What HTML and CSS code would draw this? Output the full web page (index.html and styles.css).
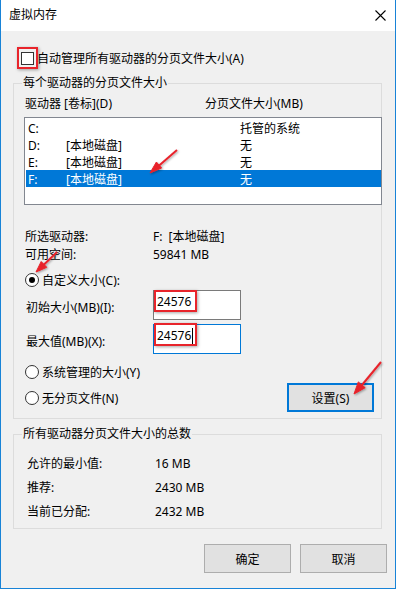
FILE: index.html
```html
<!DOCTYPE html>
<html lang="zh-CN">
<head>
<meta charset="utf-8">
<title>虚拟内存</title>
<link rel="stylesheet" href="styles.css">
</head>
<body>
<div class="window">
  <div class="titlebar">
    <span class="title">虚拟内存</span>
    <svg class="close" width="11" height="11" viewBox="0 0 11 11"><path d="M0.5 0.5 L10.5 10.5 M10.5 0.5 L0.5 10.5" stroke="#000" stroke-width="1.1" fill="none"/></svg>
  </div>
  <div class="content">
    <div class="auto-row">
      <span class="checkbox"></span>
      <span class="auto-label">自动管理所有驱动器的分页文件大小(A)</span>
    </div>

    <div class="group g1">
      <div class="legend">每个驱动器的分页文件大小</div>
      <div class="cols">
        <span class="col1">驱动器 [卷标](D)</span>
        <span>分页文件大小(MB)</span>
      </div>
      <div class="listbox">
        <div class="lrow"><span>C:</span><span></span><span>托管的系统</span></div>
        <div class="lrow"><span>D:</span><span>[本地磁盘]</span><span>无</span></div>
        <div class="lrow"><span>E:</span><span>[本地磁盘]</span><span>无</span></div>
        <div class="lrow selected"><span>F:</span><span>[本地磁盘]</span><span>无</span></div>
      </div>
      <div class="info first"><span class="key">所选驱动器:</span><span class="val">F:<span class="gap"></span>[本地磁盘]</span></div>
      <div class="info"><span class="key">可用空间:</span><span class="val">59841 MB</span></div>
      <div class="radio-row r-custom"><span class="radio checked"></span><span>自定义大小(C):</span></div>
      <div class="field-row"><span class="fkey">初始大小(MB)(I):</span><span class="input">24576</span></div>
      <div class="field-row second"><span class="fkey">最大值(MB)(X):</span><span class="input focused">24576<span class="caret"></span></span></div>
      <div class="radio-row r-sys"><span class="radio"></span><span>系统管理的大小(Y)</span></div>
      <div class="last-row">
        <div class="radio-inline"><span class="radio"></span><span>无分页文件(N)</span></div>
        <div class="btn default set-btn">设置(S)</div>
      </div>
    </div>

    <div class="group g2">
      <div class="legend">所有驱动器分页文件大小的总数</div>
      <div class="trow"><span class="tkey">允许的最小值:</span><span>16 MB</span></div>
      <div class="trow"><span class="tkey">推荐:</span><span>2430 MB</span></div>
      <div class="trow"><span class="tkey">当前已分配:</span><span>2432 MB</span></div>
    </div>

    <div class="buttons">
      <div class="btn">确定</div>
      <div class="btn">取消</div>
    </div>
  </div>

  <span class="mark mark-check"></span>
  <span class="mark mark-init"></span>
  <span class="mark mark-max"></span>
  <svg class="arrows" width="396" height="589" viewBox="0 0 396 589">
    <defs>
      <filter id="sh" x="-50%" y="-50%" width="200%" height="200%">
        <feDropShadow dx="1" dy="1" stdDeviation="1.2" flood-color="#000" flood-opacity="0.35"/>
      </filter>
    </defs>
    <g filter="url(#sh)" fill="#e8242b" stroke="#e8242b">
      <line x1="177" y1="150" x2="158" y2="166.5" stroke-width="2"/>
      <polygon points="150,173 161.6,168 156.4,162" stroke-width="1"/>
      <line x1="57" y1="252" x2="43" y2="265.5" stroke-width="2"/>
      <polygon points="36,272 46.8,267.3 41.2,261.5" stroke-width="1"/>
      <line x1="381" y1="362" x2="362" y2="385" stroke-width="2"/>
      <polygon points="354,394 365.2,387.7 358.3,381.9" stroke-width="1"/>
    </g>
  </svg>
</div>
</body>
</html>
```

FILE: styles.css
```css
* { box-sizing: border-box; }
html, body { margin: 0; padding: 0; background: #f0f0f0; }
body {
  font-family: "Noto Sans", "Noto Sans CJK SC", sans-serif;
  font-size: 12px;
  color: #000;
}
.window {
  position: relative;
  width: 396px;
  height: 589px;
  background: #f0f0f0;
  border: 1px solid #1883d7;
  border-top: none;
  overflow: hidden;
}
.titlebar {
  height: 31px;
  background: #fff;
  display: flex;
  align-items: center;
  padding-left: 8px;
  padding-right: 9px;
}
.title { flex: 1; line-height: 16px; margin-top: -1px; }
.close { display: block; margin-top: -1px; }

.content { padding: 0; }

.auto-row {
  margin-top: 17px;
  height: 20px;
  display: flex;
  align-items: center;
  padding-left: 20px;
}
.checkbox {
  width: 13px;
  height: 13px;
  border: 1px solid #333;
  background: #fff;
  margin-right: 3px;
}

.group {
  position: relative;
  margin-left: 12px;
  width: 369px;
  border: 1px solid #dcdcdc;
}
.legend {
  position: absolute;
  top: -9px;
  left: 8px;
  padding: 0 1px;
  background: #f0f0f0;
  line-height: 16px;
}
.g1 { margin-top: 15px; padding: 10px 0 6px 0; }

.cols {
  height: 18px;
  display: flex;
  align-items: center;
  padding-left: 11px;
}
.col1 { width: 180px; }

.listbox {
  margin-top: 5px;
  margin-left: 10px;
  width: 358px;
  height: 88px;
  border: 1px solid #828790;
  background: #fff;
  padding: 1px 0 0 1px;
}
.lrow {
  height: 17px;
  display: grid;
  grid-template-columns: 38px 174px 1fr;
  align-items: center;
  padding-left: 2px;
}
.lrow.selected { background: #0078d7; color: #fff; }

.info {
  height: 18px;
  display: flex;
  align-items: center;
  padding-left: 11px;
}
.info.first { margin-top: 22px; }
.key { width: 128px; }
.gap { display: inline-block; width: 6px; }

.radio-row {
  height: 20px;
  display: flex;
  align-items: center;
  padding-left: 11px;
}
.r-custom { margin-top: 7px; }
.r-sys { margin-top: 8px; }
.radio {
  position: relative;
  width: 14px;
  height: 14px;
  border: 1px solid #333;
  border-radius: 50%;
  background: #fff;
  margin-right: 3px;
  flex: none;
}
.radio.checked::after {
  content: "";
  position: absolute;
  left: 3px;
  top: 3px;
  width: 6px;
  height: 6px;
  border-radius: 50%;
  background: #000;
}

.field-row {
  height: 30px;
  display: flex;
  align-items: center;
  padding-left: 12px;
}
.field-row.second { margin-top: 4px; }
.fkey { width: 127px; margin-top: 3px; }
.input {
  width: 88px;
  height: 30px;
  border: 1px solid #7a7a7a;
  background: #fff;
  padding: 3px 0 0 3px;
  line-height: 16px;
  display: flex;
  align-items: flex-start;
}
.input.focused { border-color: #0078d7; }
.caret {
  display: inline-block;
  width: 1px;
  height: 16px;
  background: #000;
  margin-left: 1px;
}

.last-row {
  margin-top: 1px;
  height: 29px;
  display: flex;
  align-items: center;
  padding-left: 11px;
}
.radio-inline { display: flex; align-items: center; flex: 1; }

.btn {
  width: 87px;
  height: 29px;
  background: #e1e1e1;
  border: 1px solid #adadad;
  display: flex;
  align-items: center;
  justify-content: center;
}
.btn.default { border: 2px solid #0078d7; }
.set-btn { margin-right: 7px; }

.g2 { margin-top: 15px; padding: 16px 0 5px 13px; }
.trow {
  height: 24px;
  display: flex;
  align-items: center;
}
.tkey { width: 128px; }

.buttons {
  margin-top: 15px;
  display: flex;
  justify-content: flex-end;
  gap: 9px;
  padding-right: 8px;
}

.mark {
  position: absolute;
  border: 2px solid #e8242b;
  box-shadow: 1px 1px 3px rgba(0,0,0,0.35);
}
.mark-check { left: 16px; top: 47px; width: 21px; height: 22px; }
.mark-init { left: 153px; top: 290px; width: 43px; height: 22px; }
.mark-max { left: 153px; top: 323px; width: 43px; height: 23px; }
.arrows { position: absolute; left: -1px; top: 0; pointer-events: none; }
```
